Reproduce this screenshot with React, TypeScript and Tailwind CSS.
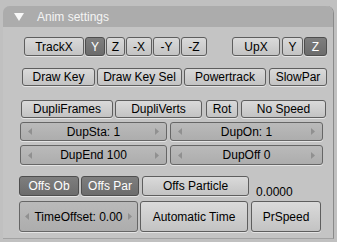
import type { ReactNode } from 'react'

const font = { fontFamily: '"Liberation Sans", Arial, sans-serif' }

function Btn({ label, on, className }: { label: string; on?: boolean; className: string }) {
  return (
    <div
      className={`flex items-center justify-center rounded-[3px] border text-[12px] leading-none whitespace-nowrap shadow-[0_1px_0_#e4e4e4] ${
        on
          ? 'border-[#4e4e4e] bg-linear-to-b from-[#7e7e7e] to-[#6c6c6c] text-white'
          : 'border-[#5e5e5e] bg-linear-to-b from-[#dadada] to-[#c3c3c3] text-black'
      } ${className}`}
    >
      {label}
    </div>
  )
}

function Arrow({ dir }: { dir: 'l' | 'r' }) {
  return (
    <svg width="4" height="7" viewBox="0 0 4 7" className="shrink-0">
      {dir === 'l' ? <path d="M4 0 L0 3.5 L4 7 Z" fill="#909090" /> : <path d="M0 0 L4 3.5 L0 7 Z" fill="#909090" />}
    </svg>
  )
}

function Num({ label, className }: { label: string; className: string }) {
  return (
    <div
      className={`flex items-center justify-between rounded-[3px] border border-[#666] bg-linear-to-b from-[#bababa] to-[#adadad] px-[7px] text-[12px] leading-none text-black shadow-[0_1px_0_#e4e4e4] ${className}`}
    >
      <Arrow dir="l" />
      <span>{label}</span>
      <Arrow dir="r" />
    </div>
  )
}

function Row({ children, className }: { children: ReactNode; className: string }) {
  return <div className={`flex ${className}`}>{children}</div>
}

export default function App() {
  return (
    <div className="h-[242px] w-[337px] overflow-hidden bg-[#c0c0c0] pl-[3px] pt-[6px]" style={font}>
      <div className="h-[233px] w-[331px] rounded-t-[7px] border-r border-b border-r-[#8a8a8a] border-b-[#a2a2a2] shadow-[inset_1px_0_0_#b4b4b4]">
        <div className="flex h-[21px] items-center rounded-t-[7px] bg-[#acacac] pl-[11px] text-[12px] text-[#f4f4f4]">
          <svg width="10" height="8" viewBox="0 0 10 8" className="mr-[13px]">
            <path d="M0 0 L10 0 L5 8 Z" fill="#f8f8f8" />
          </svg>
          Anim settings
        </div>
        <div className="h-[211px] bg-[#c4c4c4] pt-[10px]">
          <Row className="h-[19px] pl-[21px]">
            <Btn label="TrackX" className="w-[60px]" />
            <Btn label="Y" on className="ml-px w-[20px]" />
            <Btn label="Z" className="ml-px w-[19px]" />
            <Btn label="-X" className="ml-px w-[26px]" />
            <Btn label="-Y" className="ml-px w-[27px]" />
            <Btn label="-Z" className="ml-px w-[26px]" />
            <Btn label="UpX" className="ml-[25px] w-[48px]" />
            <Btn label="Y" className="ml-[2px] w-[21px]" />
            <Btn label="Z" on className="ml-px w-[23px]" />
          </Row>
          <Row className="mt-[12px] h-[18px] pl-[19px]">
            <Btn label="Draw Key" className="w-[73px]" />
            <Btn label="Draw Key Sel" className="ml-[2px] w-[85px]" />
            <Btn label="Powertrack" className="ml-[2px] w-[82px]" />
            <Btn label="SlowPar" className="ml-[3px] w-[58px]" />
          </Row>
          <Row className="mt-[14px] h-[18px] pl-[18px]">
            <Btn label="DupliFrames" className="w-[92px]" />
            <Btn label="DupliVerts" className="ml-[2px] w-[87px]" />
            <Btn label="Rot" className="ml-[4px] w-[32px]" />
            <Btn label="No Speed" className="ml-[3px] w-[85px]" />
          </Row>
          <Row className="mt-[4px] h-[19px] pl-[17px]">
            <Num label="DupSta: 1" className="w-[147px]" />
            <Num label="DupOn: 1" className="ml-[3px] w-[153px]" />
          </Row>
          <Row className="mt-[4px] h-[20px] pl-[17px]">
            <Num label="DupEnd 100" className="w-[147px]" />
            <Num label="DupOff 0" className="ml-[3px] w-[153px]" />
          </Row>
          <Row className="mt-[11px] h-[20px] items-end pl-[16px]">
            <Btn label="Offs Ob" on className="h-[20px] w-[60px]" />
            <Btn label="Offs Par" on className="ml-[2px] h-[20px] w-[58px]" />
            <Btn label="Offs Particle" className="ml-[3px] h-[20px] w-[107px]" />
            <div className="ml-[7px] mb-[-2px] text-[12px] leading-none text-black">0.0000</div>
          </Row>
          <Row className="mt-[5px] h-[31px] pl-[16px]">
            <Num label="TimeOffset: 0.00" className="w-[119px] !px-[5px]" />
            <Btn label="Automatic Time" className="ml-[2px] w-[108px]" />
            <Btn label="PrSpeed" className="ml-[3px] w-[70px]" />
          </Row>
        </div>
      </div>
    </div>
  )
}
